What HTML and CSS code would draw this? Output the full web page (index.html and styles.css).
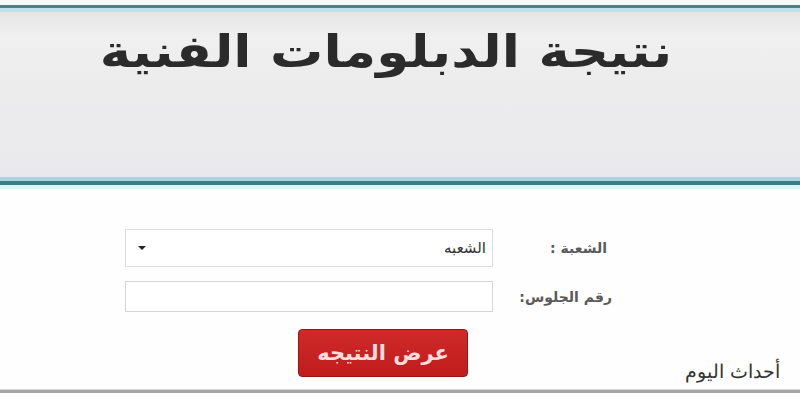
FILE: index.html
```html
<!DOCTYPE html>
<html lang="ar" dir="rtl">
<head>
<meta charset="utf-8">
<link rel="stylesheet" href="styles.css">
</head>
<body>
<div class="page">
  <div class="top-gap"></div>
  <header class="banner">
    <h1 class="title">نتيجة الدبلومات الفنية</h1>
  </header>
  <main class="form">
    <div class="row">
      <label class="label">الشعبة :</label>
      <div class="select"><span class="sel-text">الشعبه</span><span class="arrow"></span></div>
    </div>
    <div class="row row2">
      <label class="label">رقم الجلوس:</label>
      <div class="input"></div>
    </div>
    <div class="btn-row"><button class="btn">عرض النتيجه</button></div>
  </main>
  <div class="rule"></div>
  <div class="mark">أحداث اليوم</div>
</div>
</body>
</html>
```
FILE: styles.css
```css
html, body { margin: 0; padding: 0; }
body { width: 800px; height: 400px; overflow: hidden; background: #fefefe; font-family: "DejaVu Sans", sans-serif; }
.page { position: relative; width: 800px; height: 400px; }
.top-gap { height: 5px; background: #f6f8f8; }
.banner {
  height: 173px;
  border-top: 3px solid #4d7f86;
  border-bottom: 4px solid #3f7b83;
  box-shadow: inset 0 4px 0 #bfe0ea, inset 0 -4px 0 #a9d3e0, 0 4px 0 #d6f6fb;
  background: linear-gradient(#e4e4e4 0px, #f0f0f0 30px, #ededed 60px, #e9e8ec 100%);
  display: flex;
  justify-content: flex-start;
  padding-right: 128px;
}
.title {
  margin: 21px 0 0;
  font-size: 45px;
  font-weight: bold;
  color: #2b2b2b;
  line-height: 1;
  transform: scaleX(1.18);
  transform-origin: right top;
}
.form { display: flex; flex-direction: column; margin-top: 44px; }
.row { display: flex; align-items: center; padding-right: 193px; gap: 8px; }
.row2 { margin-top: 14px; padding-right: 188px; }
.label { font-size: 14px; color: #5a5a5a; font-weight: bold; text-align: right; }
.row .label { width: 106px; }
.row2 .label { width: 111px; }
.select {
  width: 368px; height: 38px; border: 1px solid #dcdcdc; background: #fff;
  display: flex; align-items: center; justify-content: space-between; padding: 0 6px 0 12px; box-sizing: border-box;
}
.row2 .input { width: 368px; height: 31px; border: 1px solid #d6d6d6; background: #fff; box-sizing: border-box; }
.sel-text { font-size: 15px; color: #333; }
.arrow { width: 0; height: 0; border-left: 4px solid transparent; border-right: 4px solid transparent; border-top: 4px solid #222; }
.btn-row { display: flex; justify-content: flex-start; padding-right: 332px; margin-top: 17px; }
.btn {
  width: 170px; height: 48px; border: 1px solid #9e1414; border-radius: 4px;
  background: linear-gradient(#cf2a2a, #c11c1c); color: #f7dede;
  font-family: "DejaVu Sans", sans-serif; font-weight: bold; font-size: 21px; padding: 0;
}
.rule { position: absolute; left: 0; right: 0; top: 389px; height: 3px; background: #a6a6a6; border-top: 1px solid #d8d8d8; }
.mark { position: absolute; right: 20px; top: 360px; font-size: 19px; color: #333; font-family: "DejaVu Sans", sans-serif; font-weight: 300; }
```
